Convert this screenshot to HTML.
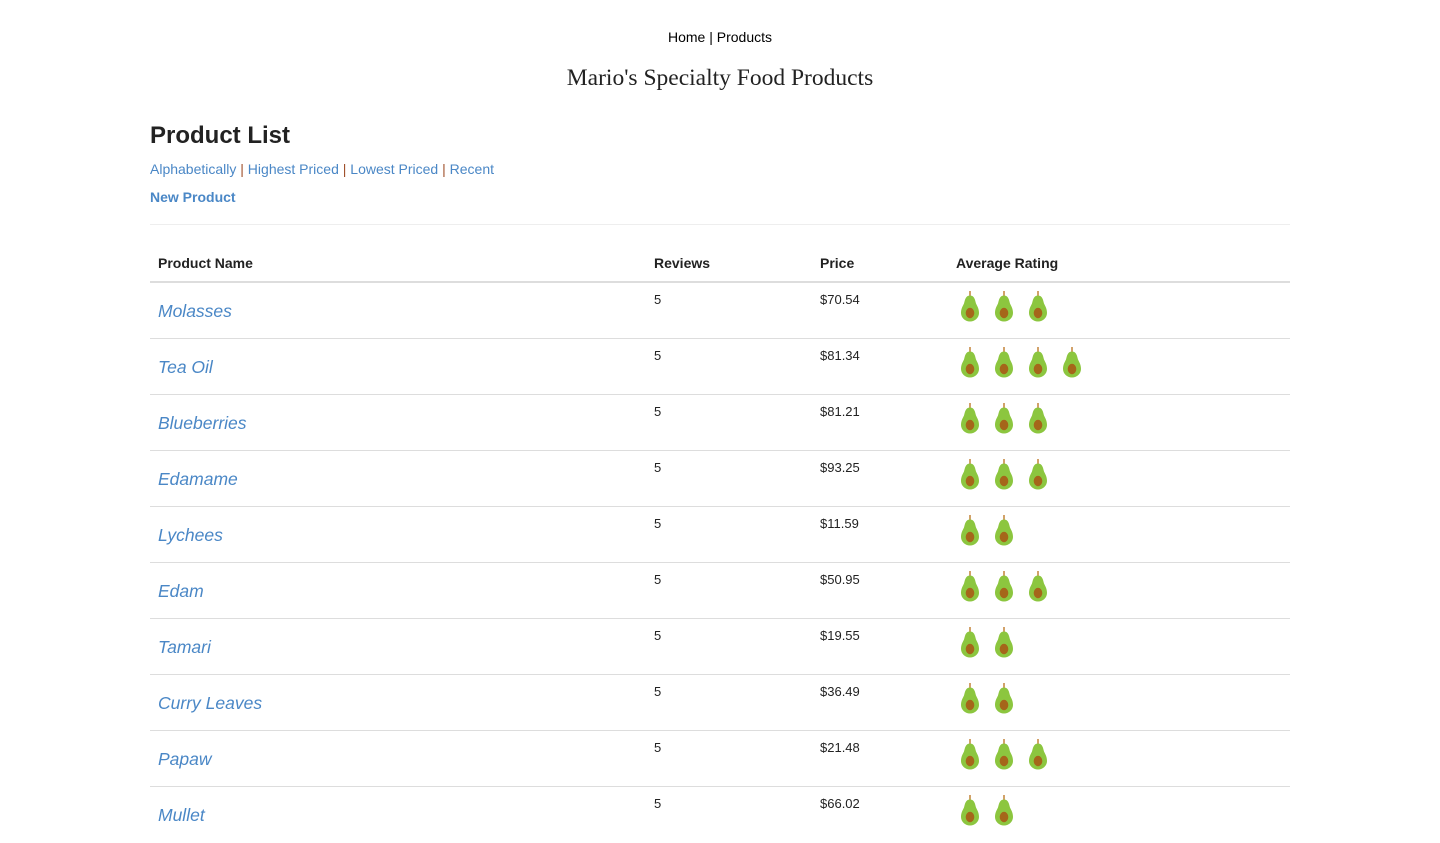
<!DOCTYPE html>
<html><head><meta charset="utf-8"><style>
body{margin:0;background:#fff;font-family:"Liberation Sans",Helvetica,Arial,sans-serif;color:#333;}
.nav{position:absolute;top:28px;left:0;width:1440px;text-align:center;font-size:14px;color:#000;line-height:18px}
.title{position:absolute;top:63px;left:0;width:1440px;text-align:center;font-family:"Liberation Serif",serif;font-size:23.5px;color:#222;line-height:30px}
h1{position:absolute;top:122px;left:150px;margin:0;font-size:24px;font-weight:bold;line-height:28px;color:#222}
.sort{position:absolute;top:160px;left:150px;font-size:14px;line-height:18px;color:#4a87c6}
.sort span{color:#a0522d}
.new{position:absolute;top:188px;left:150px;font-size:14px;font-weight:bold;color:#4a87c6;line-height:18px}
.hr{position:absolute;top:224px;left:150px;width:1140px;border-top:1px solid #eee}
.th{position:absolute;top:255px;font-size:14px;font-weight:bold;color:#222;line-height:16px}
.hline{position:absolute;top:281px;left:150px;width:1140px;border-top:2px solid #ddd}
.row{position:absolute;left:150px;width:1140px;height:56px}
.row.b{border-top:1px solid #ddd}
.nm{position:absolute;left:8px;top:17px;font-size:17.5px;font-style:italic;color:#4a87c6;line-height:22px}
.n{position:absolute;top:9px;font-size:13px;color:#222;line-height:16px}
.av{position:absolute;top:8px;left:810px;display:flex;gap:14px}
</style></head><body>
<svg width="0" height="0" style="position:absolute"><defs><symbol id="a" viewBox="0 0 20 31"><rect x="9" y="0" width="2" height="5" fill="#d2a26a"/><path d="M10 4.5C5.5 4.5 5 9 4 12.5 2.5 15.5 1 18 1 22a9 8.5 0 0 0 18 0c0-4-1.5-6.5-3-9.5C15 9 14.5 4.5 10 4.5Z" fill="#8cc63f"/><ellipse cx="10" cy="22" rx="4.3" ry="5.2" fill="#a5661a"/></symbol></defs></svg>
<div class="nav">Home | Products</div>
<div class="title">Mario's Specialty Food Products</div>
<h1>Product List</h1>
<div class="sort">Alphabetically <span>|</span> Highest Priced <span>|</span> Lowest Priced <span>|</span> Recent</div>
<div class="new">New Product</div>
<div class="hr"></div>
<div class="th" style="left:158px">Product Name</div>
<div class="th" style="left:654px">Reviews</div>
<div class="th" style="left:820px">Price</div>
<div class="th" style="left:956px">Average Rating</div>
<div class="hline"></div>
<div id="rows"></div>
<script>
var d=[["Molasses","$70.54",3],["Tea Oil","$81.34",4],["Blueberries","$81.21",3],["Edamame","$93.25",3],["Lychees","$11.59",2],["Edam","$50.95",3],["Tamari","$19.55",2],["Curry Leaves","$36.49",2],["Papaw","$21.48",3],["Mullet","$66.02",2]];
var h="";d.forEach(function(r,i){var ic="";for(var k=0;k<r[2];k++)ic+='<svg width="20" height="31"><use href="#a"/></svg>';
h+='<div class="row'+(i?' b':'')+'" style="top:'+(i==0?283:282+i*56)+'px"><div class="nm">'+r[0]+'</div><div class="n" style="left:504px">5</div><div class="n" style="left:670px">'+r[1]+'</div><div class="av">'+ic+'</div></div>';});
document.getElementById("rows").innerHTML=h;
</script>
</body></html>
